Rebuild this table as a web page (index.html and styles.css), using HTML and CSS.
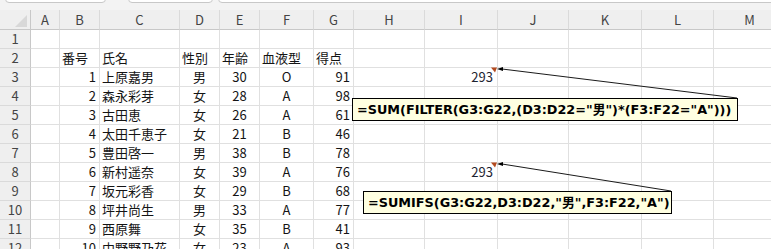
FILE: index.html
```html
<!DOCTYPE html>
<html lang="ja">
<head>
<meta charset="utf-8">
<title>Sheet</title>
<link rel="stylesheet" href="styles.css">
</head>
<body>
<div class="app">
  <div class="topbar">
    <div class="box box-name"></div>
    <div class="box box-fx"></div>
    <div class="box box-formula"></div>
  </div>
  <div class="sheet">
    <div class="row hdr">
      <div class="corner"></div><div>A</div><div>B</div><div>C</div><div>D</div><div>E</div><div>F</div><div>G</div><div>H</div><div>I</div><div>J</div><div>K</div><div>L</div><div>M</div>
    </div>
    <div class="row">
      <div class="rh">1</div><div></div><div></div><div></div><div></div><div></div><div></div><div></div><div></div><div></div><div></div><div></div><div></div><div></div>
    </div>
    <div class="row">
      <div class="rh">2</div><div></div><div>番号</div><div>氏名</div><div>性別</div><div>年齢</div><div>血液型</div><div>得点</div><div></div><div></div><div></div><div></div><div></div><div></div>
    </div>
    <div class="row">
      <div class="rh">3</div><div></div><div class="r">1</div><div>上原嘉男</div><div class="m">男</div><div class="m">30</div><div class="m">O</div><div class="r">91</div><div></div><div class="r res">293</div><div></div><div></div><div></div><div></div>
    </div>
    <div class="row">
      <div class="rh">4</div><div></div><div class="r">2</div><div>森永彩芽</div><div class="m">女</div><div class="m">28</div><div class="m">A</div><div class="r">98</div><div></div><div></div><div></div><div></div><div></div><div></div>
    </div>
    <div class="row">
      <div class="rh">5</div><div></div><div class="r">3</div><div>古田恵</div><div class="m">女</div><div class="m">26</div><div class="m">A</div><div class="r">61</div><div></div><div></div><div></div><div></div><div></div><div></div>
    </div>
    <div class="row">
      <div class="rh">6</div><div></div><div class="r">4</div><div>太田千恵子</div><div class="m">女</div><div class="m">21</div><div class="m">B</div><div class="r">46</div><div></div><div></div><div></div><div></div><div></div><div></div>
    </div>
    <div class="row">
      <div class="rh">7</div><div></div><div class="r">5</div><div>豊田啓一</div><div class="m">男</div><div class="m">38</div><div class="m">B</div><div class="r">78</div><div></div><div></div><div></div><div></div><div></div><div></div>
    </div>
    <div class="row">
      <div class="rh">8</div><div></div><div class="r">6</div><div>新村遥奈</div><div class="m">女</div><div class="m">39</div><div class="m">A</div><div class="r">76</div><div></div><div class="r res">293</div><div></div><div></div><div></div><div></div>
    </div>
    <div class="row">
      <div class="rh">9</div><div></div><div class="r">7</div><div>坂元彩香</div><div class="m">女</div><div class="m">29</div><div class="m">B</div><div class="r">68</div><div></div><div></div><div></div><div></div><div></div><div></div>
    </div>
    <div class="row">
      <div class="rh">10</div><div></div><div class="r">8</div><div>坪井尚生</div><div class="m">男</div><div class="m">33</div><div class="m">A</div><div class="r">77</div><div></div><div></div><div></div><div></div><div></div><div></div>
    </div>
    <div class="row">
      <div class="rh">11</div><div></div><div class="r">9</div><div>西原舞</div><div class="m">女</div><div class="m">35</div><div class="m">B</div><div class="r">41</div><div></div><div></div><div></div><div></div><div></div><div></div>
    </div>
    <div class="row">
      <div class="rh">12</div><div></div><div class="r">10</div><div>中野野乃花</div><div class="m">女</div><div class="m">23</div><div class="m">A</div><div class="r">93</div><div></div><div></div><div></div><div></div><div></div><div></div>
    </div>
  </div>

  <svg class="overlay" width="771" height="249" viewBox="0 0 771 249">
    <polygon points="491,67.5 497,67.5 495,72.5" fill="#b34a1f"/>
    <polygon points="491,162.5 497,162.5 495,167.5" fill="#b34a1f"/>
    <line x1="502" y1="69" x2="737" y2="98" stroke="#1a1a1a" stroke-width="1"/>
    <polygon points="497,69 503,67 503,71" fill="#000"/>
    <line x1="502" y1="164" x2="671" y2="191" stroke="#1a1a1a" stroke-width="1"/>
    <polygon points="497,164 503,162 503,166" fill="#000"/>
  </svg>

  <div class="callout callout-1">=SUM(FILTER(G3:G22,(D3:D22="男")*(F3:F22="A")))</div>
  <div class="callout callout-2">=SUMIFS(G3:G22,D3:D22,"男",F3:F22,"A")</div>
</div>
</body>
</html>
```
FILE: styles.css
```css
* { box-sizing: border-box; }
html, body { margin: 0; padding: 0; }
body {
  width: 771px;
  height: 249px;
  overflow: hidden;
  background: #ffffff;
  font-family: "Noto Sans CJK JP", "Liberation Sans", sans-serif;
}
.app {
  position: relative;
  width: 771px;
  height: 249px;
  overflow: hidden;
}
.topbar {
  height: 10px;
  background: #f3f3f3;
  display: flex;
  align-items: flex-end;
  padding-left: 5px;
}
.box {
  flex: none;
  height: 16px;
  margin-bottom: 7px;
  border: 1px solid #c8c8c8;
  border-radius: 4px;
  background: #ffffff;
}
.box-name { width: 101px; margin-right: 22px; }
.box-fx { width: 85px; margin-right: 5px; }
.box-formula { width: 580px; }

.sheet { display: flex; flex-direction: column; }
.row {
  display: grid;
  grid-template-columns: 31px 29px 40px 80px 40px 40px 54px 40px 71px 73px 71px 73px 72px 72px;
  height: 19px;
}
.row > div {
  border-right: 1px solid #e0e0e0;
  border-bottom: 1px solid #e0e0e0;
  font-size: 13px;
  line-height: 18px;
  padding: 0 2px;
  white-space: nowrap;
  overflow: hidden;
  color: #141414;
}
.row.hdr { height: 20px; }
.row.hdr > div {
  background: #efefef;
  text-align: center;
  color: #444444;
  line-height: 20px;
  border-right-color: #dadada;
  border-bottom-color: #c8c8c8;
}
.row.hdr > .corner {
  position: relative;
  border-right-color: #c8c8c8;
}
.corner::after {
  content: "";
  position: absolute;
  left: 15px;
  top: 5px;
  width: 12px;
  height: 12px;
  background: #d8d8d8;
  clip-path: polygon(100% 0, 100% 100%, 0 100%);
}
.row > .rh {
  background: #efefef;
  text-align: center;
  color: #444444;
  border-right-color: #c8c8c8;
  border-bottom-color: #dadada;
  padding: 0;
}
.row > .r { text-align: right; padding-right: 3px; }
.row > .m { text-align: center; }
.row > .res { padding-right: 4px; color: #1d2330; }

.overlay {
  position: absolute;
  left: 0;
  top: 0;
  pointer-events: none;
}
.callout {
  position: absolute;
  height: 23px;
  background: #ffffe1;
  border: 1px solid #000000;
  font-family: "DejaVu Sans", "Noto Sans CJK JP", sans-serif;
  font-weight: bold;
  font-size: 12.8px;
  line-height: 21px;
  padding-left: 4px;
  color: #000000;
  white-space: nowrap;
}
.callout-1 { left: 352px; top: 98px; width: 386px; }
.callout-2 { left: 363px; top: 191px; width: 309px; }
```
